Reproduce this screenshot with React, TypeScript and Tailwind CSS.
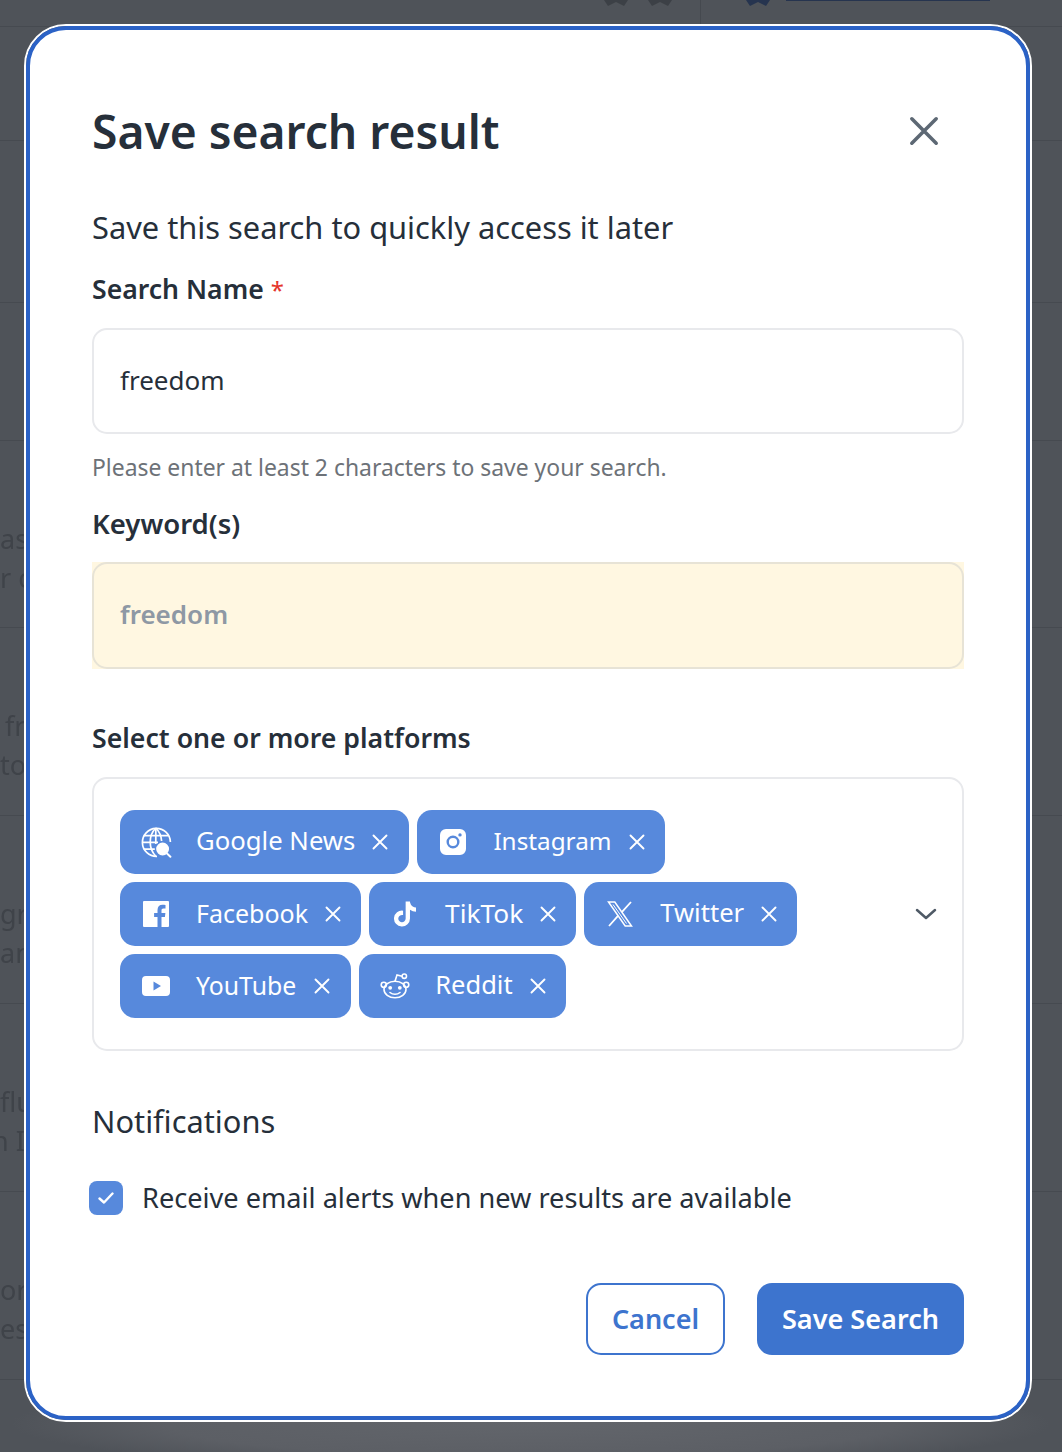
import React from "react";

const X = ({ s = 16, w = 1.9 }: { s?: number; w?: number }) => (
  <svg width={s} height={s} viewBox="0 0 16 16" fill="none" stroke="currentColor" strokeWidth={w} strokeLinecap="round">
    <path d="M1.500 1.500 14.500 14.500M14.500 1.500 1.500 14.500" />
  </svg>
);

const Globe = () => (
  <svg width="32" height="32" viewBox="0 0 32 32" fill="none" stroke="white" strokeWidth="1.700">
    <path d="M17 30.400A14 14 0 1 1 30.400 16" />
    <path d="M15.800 2c-4 4-5.600 8.400-5.600 14s1.800 10.200 5.400 14" />
    <path d="M15.800 2c3.600 3.600 5.600 8 5.800 13" />
    <path d="M15.800 2v16" />
    <path d="M3.800 9.600h24.400M2 16.400h16M3.800 23.200h11" />
    <circle cx="22.600" cy="23" r="5.600" fill="white" stroke="white" />
    <path d="m27 27.600 3.400 3.200" strokeWidth="2" strokeLinecap="round" />
  </svg>
);

const Facebook = () => (
  <svg width="26" height="26" viewBox="0 0 26 26">
    <path fill="white" d="M1 0h24a1 1 0 0 1 1 1v24a1 1 0 0 1-1 1h-6.500v-10h3.400l.5-4h-3.900V9.500c0-1.200.4-2 2-2h2V4c-.5-.1-1.700-.2-3-.2-3 0-5 1.800-5 5.100V12h-3.400v4H14.500v10H1a1 1 0 0 1-1-1V1a1 1 0 0 1 1-1Z" />
  </svg>
);

const Instagram = () => (
  <svg width="26" height="26" viewBox="0 0 26 26">
    <path fillRule="evenodd" fill="white" d="M6 0h14a6 6 0 0 1 6 6v14a6 6 0 0 1-6 6H6a6 6 0 0 1-6-6V6a6 6 0 0 1 6-6Zm7 6.500a6.500 6.500 0 1 0 0 13 6.500 6.500 0 0 0 0-13Zm0 2.400a4.100 4.100 0 1 1 0 8.200 4.100 4.100 0 0 1 0-8.200ZM20 4.200a1.700 1.700 0 1 0 0 3.400 1.700 1.700 0 0 0 0-3.400Z" />
  </svg>
);

const TikTok = () => (
  <svg width="22" height="26" viewBox="0 0 448 512">
    <path fill="white" d="M448 209.900a210.100 210.100 0 0 1-122.800-39.300V349.400A162.600 162.600 0 1 1 185 188.300V278.200a74.600 74.600 0 1 0 52.200 71.200V0l88 0a121.200 121.200 0 0 0 1.900 22.200h0A122.200 122.200 0 0 0 381 102.400a121.400 121.400 0 0 0 67 20.100Z" />
  </svg>
);

const XLogo = () => (
  <svg width="26" height="26" viewBox="0 0 26 26" fill="none" stroke="white" strokeWidth="1.500">
    <path d="M1.500 1h6.300l16.700 24h-6.300Z" />
    <path d="M11.200 14.700 2 25M24 1l-9.200 10.200" strokeWidth="1.800" />
    <path d="M6 3.500 19.500 22.500" strokeWidth="1" />
  </svg>
);

const YouTube = () => (
  <svg width="28" height="20" viewBox="0 0 28 20">
    <path fillRule="evenodd" fill="white" d="M4 0h20a4 4 0 0 1 4 4v12a4 4 0 0 1-4 4H4a4 4 0 0 1-4-4V4a4 4 0 0 1 4-4Zm7.500 5.500v9l7.500-4.500Z" />
  </svg>
);

const Reddit = () => (
  <svg width="30" height="26" viewBox="0 0 30 26" fill="none" stroke="white" strokeWidth="1.600">
    <ellipse cx="15" cy="16.500" rx="11" ry="8.300" />
    <circle cx="3.800" cy="11.800" r="2.600" />
    <circle cx="26.200" cy="11.800" r="2.600" />
    <path d="M15 8.200 17 2l5 1.200" />
    <circle cx="24.300" cy="3.200" r="2.200" />
    <circle cx="10.200" cy="14.800" r="1.900" fill="white" stroke="none" />
    <circle cx="19.800" cy="14.800" r="1.900" fill="white" stroke="none" />
    <path d="M10 19.500c2.800 2.400 7.200 2.400 10 0" strokeLinecap="round" />
  </svg>
);

const Chip = ({ icon, label, size, pr = "pr-[20px]", gap = "ml-[17px]" }: { icon: React.ReactNode; label: string; size: string; pr?: string; gap?: string }) => (
  <span className={`flex h-[64px] items-center rounded-[15px] bg-[#5789dc] pl-[20px] ${pr} leading-none text-white`}>
    <span className="flex w-[32px] items-center justify-center">{icon}</span>
    <span className={`mb-[2px] ml-[24px] ${size}`}>{label}</span>
    <span className={gap}>
      <X />
    </span>
  </span>
);

const Row = ({ h, a, b, aIndent = "", bIndent = "" }: { h: string; a?: string; b?: string; aIndent?: string; bIndent?: string }) => (
  <div className={`${h} flex flex-col gap-[11px] border-b border-[#464a50] pt-[84px] text-[27px] leading-[28px] text-[#3f4349] blur-[0.7px]`}>
    {a && <span className={`whitespace-nowrap ${aIndent}`}>{a}</span>}
    {b && <span className={`whitespace-nowrap ${bIndent}`}>{b}</span>}
  </div>
);

const Star = ({ fill }: { fill: string }) => (
  <svg width="24" height="6" viewBox="0 0 24 6" fill={fill}>
    <path d="M0 0h24l-4 6-8-4-8 4Z" />
  </svg>
);

export default function App() {
  return (
    <div
      className="relative h-[1452px] w-[1062px] overflow-hidden bg-[#4f5359] bg-[radial-gradient(ellipse_520px_46px_at_50%_1424px,#62656b_0%,#5c5f65_70%,#4f5359_100%)]"
      style={{ fontFamily: '"Noto Sans", "Open Sans", sans-serif' }}
    >
      <div className="flex flex-col">
        <div className="flex h-[27px] items-start border-b border-[#464a50]">
          <div className="ml-[604px] flex gap-[20px] opacity-70">
            <Star fill="#35383e" />
            <Star fill="#35383e" />
          </div>
          <div className="ml-[28px] h-full w-px bg-[#45494f]" />
          <div className="ml-[45px]">
            <Star fill="#26344f" />
          </div>
          <div className="ml-[16px] h-[1px] w-[204px] bg-[#26344f]" />
        </div>
        <div className="h-[114px] border-b border-[#464a50]" />
        <div className="h-[162px] border-b border-[#464a50]" />
        <div className="h-[138px] border-b border-[#464a50]" />
        <Row h="h-[187px]" a="as" b="r c" />
        <Row h="h-[188px]" a="fr" b="to" aIndent="pl-[5px]" />
        <Row h="h-[188px]" a="gr" b="an" />
        <Row h="h-[188px]" a="flu" b="n In" bIndent="-ml-[8px]" />
        <Row h="h-[188px]" a="or" b="es" />
      </div>

      <div className="absolute left-[24px] top-[24px] h-[1398px] w-[1008px] rounded-[42px] border-2 border-white">
        <div className="flex h-full flex-col rounded-[40px] border-4 border-[#2b62c6] bg-white pl-[62px] pr-[62px] pt-[71px] text-[#262f3a]">
          <div className="flex h-[60px] items-center justify-between">
            <h2 className="mt-[2px] text-[46.200px] font-semibold leading-none">Save search result</h2>
            <span className="mr-[25px] text-[#5d6874]">
              <X s={30} w={1.900} />
            </span>
          </div>
          <p className="mt-[46px] text-[30.800px] leading-[40px]">Save this search to quickly access it later</p>
          <label className="mt-[24px] text-[26.600px] font-semibold leading-[36px]">
            Search Name <span className="text-[24px] font-normal text-[#e5352b]">*</span>
          </label>
          <div className="mt-[20px] flex h-[106px] items-center rounded-[15px] border-2 border-[#e8e9ec] px-[26px] pb-[2px] text-[26px]">freedom</div>
          <p className="mt-[19px] text-[22.900px] leading-[30px] text-[#6d7278]">Please enter at least 2 characters to save your search.</p>
          <label className="mt-[23px] text-[27.500px] font-semibold leading-[36px]">Keyword(s)</label>
          <div className="mt-[20px] h-[107px] bg-[#fff7e1]">
            <div className="flex h-full items-center rounded-[15px] border-2 border-[#e7e3d6] px-[26px] pb-[2px] text-[26px] font-semibold text-[#8e98a4]">freedom</div>
          </div>
          <label className="mt-[51px] text-[26.700px] font-semibold leading-[36px]">Select one or more platforms</label>
          <div className="mt-[21px] flex h-[274px] items-center rounded-[15px] border-2 border-[#e8e9ec] pl-[26px] pr-[25px]">
            <div className="flex w-[740px] flex-wrap gap-[8px]">
              <Chip icon={<Globe />} label="Google News" size="text-[25.700px]" pr="pr-[21px]" />
              <Chip icon={<Instagram />} label="Instagram" size="text-[24.300px]" />
              <Chip icon={<Facebook />} label="Facebook" size="text-[25px]" />
              <Chip icon={<TikTok />} label="TikTok" size="text-[26.300px]" />
              <Chip icon={<XLogo />} label="Twitter" size="text-[25.600px]" />
              <Chip icon={<YouTube />} label="YouTube" size="text-[24.800px]" pr="pr-[21px]" gap="ml-[18px]" />
              <Chip icon={<Reddit />} label="Reddit" size="text-[25.500px]" />
            </div>
            <svg className="ml-auto" width="22" height="12" viewBox="0 0 22 12" fill="none" stroke="#4f5a66" strokeWidth="2.500" strokeLinecap="round" strokeLinejoin="round">
              <path d="M2 2l9 8 9-8" />
            </svg>
          </div>
          <h3 className="mt-[50px] text-[30.800px] leading-[40px]">Notifications</h3>
          <div className="mt-[39px] flex items-center">
            <span className="-ml-[3px] flex h-[34px] w-[34px] items-center justify-center rounded-[8px] bg-[#5789dc]">
              <svg width="16" height="12" viewBox="0 0 16 12" fill="none" stroke="white" strokeWidth="2.400" strokeLinecap="round" strokeLinejoin="round">
                <path d="M1.500 6.500 6 10.500 14.500 1.500" />
              </svg>
            </span>
            <span className="ml-[19px] text-[27.150px] leading-[36px]">Receive email alerts when new results are available</span>
          </div>
          <div className="mt-[67px] flex justify-end gap-[32px]">
            <button className="h-[72px] w-[139px] rounded-[15px] border-2 border-[#3d74ce] bg-white text-[27px] font-semibold text-[#3d74ce]">Cancel</button>
            <button className="h-[72px] w-[207px] rounded-[15px] bg-[#3d74ce] text-[27.100px] font-semibold text-white">Save Search</button>
          </div>
        </div>
      </div>
    </div>
  );
}
